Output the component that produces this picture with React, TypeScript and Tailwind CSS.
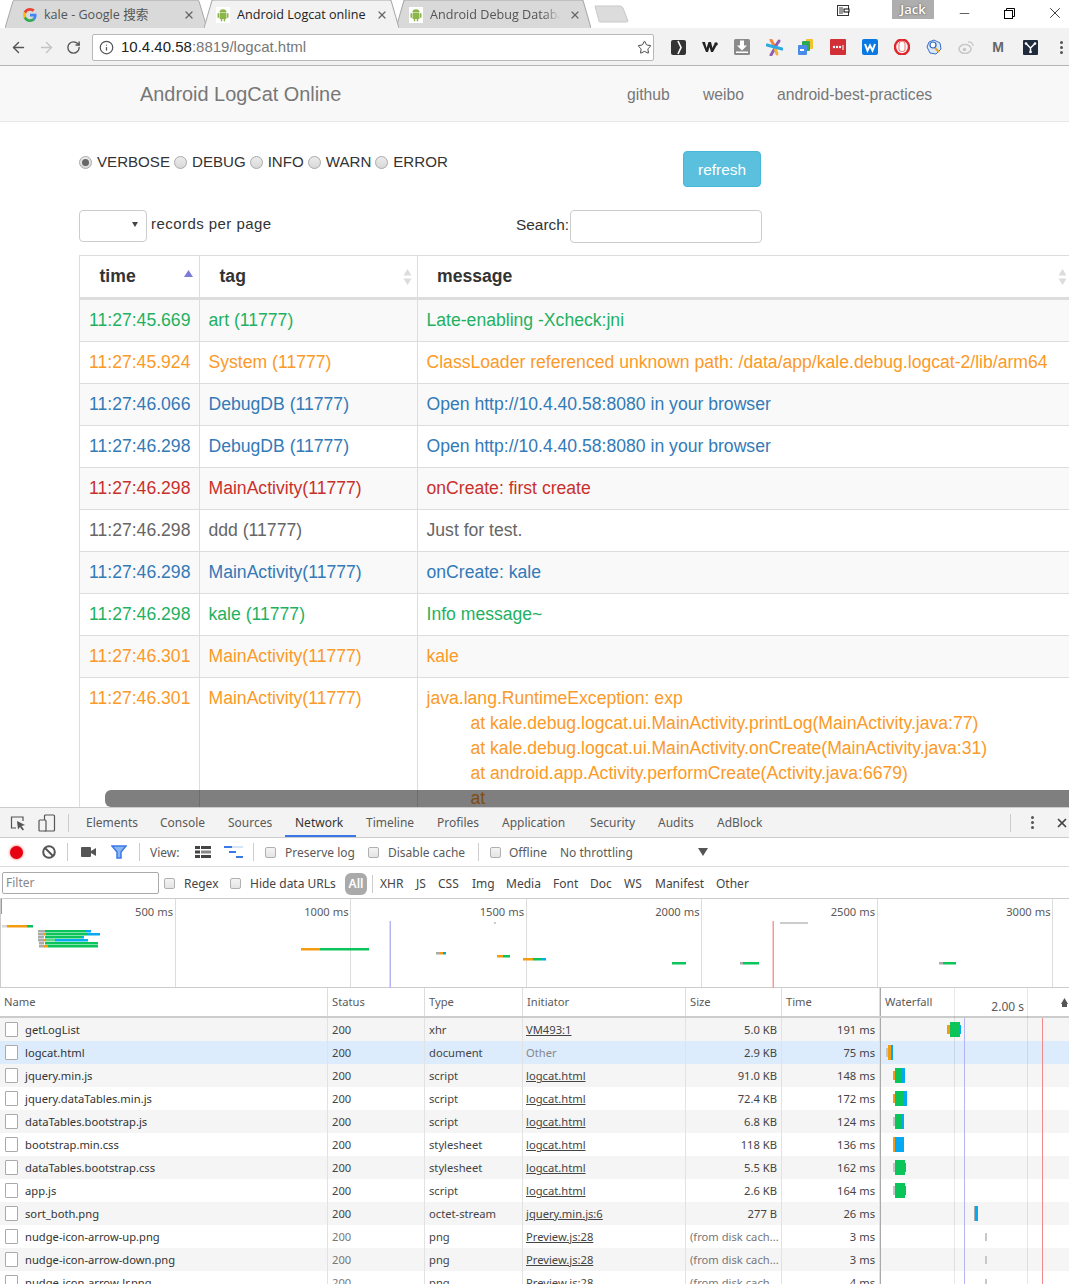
import { ArrowLeft, ArrowRight, Info, Minus, RotateCw, Star, X } from "lucide-react";

const tabs = [
  { title: "kale - Google 搜索", w: "w-[202px]", pad: "pl-[18px] pr-[12px]", icon: "g", active: false, fade: false },
  { title: "Android Logcat online", w: "w-[195px]", pad: "pl-[12px] pr-[11px]", icon: "a", active: true, fade: false },
  { title: "Android Debug Database", w: "w-[195px]", pad: "pl-[13px] pr-[10px]", icon: "a", active: false, fade: true },
];

const logRows = [
  { time: "11:27:45.669", tag: "art (11777)", msg: "Late-enabling -Xcheck:jni", color: "text-[#1fb162]" },
  { time: "11:27:45.924", tag: "System (11777)", msg: "ClassLoader referenced unknown path: /data/app/kale.debug.logcat-2/lib/arm64", color: "text-[#fb9a28]" },
  { time: "11:27:46.066", tag: "DebugDB (11777)", msg: "Open http://10.4.40.58:8080 in your browser", color: "text-[#337ab7]" },
  { time: "11:27:46.298", tag: "DebugDB (11777)", msg: "Open http://10.4.40.58:8080 in your browser", color: "text-[#337ab7]" },
  { time: "11:27:46.298", tag: "MainActivity(11777)", msg: "onCreate: first create", color: "text-[#c9302c]" },
  { time: "11:27:46.298", tag: "ddd (11777)", msg: "Just for test.", color: "text-[#666666]" },
  { time: "11:27:46.298", tag: "MainActivity(11777)", msg: "onCreate: kale", color: "text-[#337ab7]" },
  { time: "11:27:46.298", tag: "kale (11777)", msg: "Info message~", color: "text-[#1fb162]" },
  { time: "11:27:46.301", tag: "MainActivity(11777)", msg: "kale", color: "text-[#fb9a28]" },
];

const stackLines = [
  "at kale.debug.logcat.ui.MainActivity.printLog(MainActivity.java:77)",
  "at kale.debug.logcat.ui.MainActivity.onCreate(MainActivity.java:31)",
  "at android.app.Activity.performCreate(Activity.java:6679)",
  "at",
];

const levels = ["VERBOSE", "DEBUG", "INFO", "WARN", "ERROR"];

const panelTabs = [
  { label: "Elements", w: "w-[74px]" },
  { label: "Console", w: "w-[68px]" },
  { label: "Sources", w: "w-[67px]" },
  { label: "Network", w: "w-[71px]" },
  { label: "Timeline", w: "w-[71px]" },
  { label: "Profiles", w: "w-[65px]" },
  { label: "Application", w: "w-[88px]" },
  { label: "Security", w: "w-[68px]" },
  { label: "Audits", w: "w-[59px]" },
  { label: "AdBlock", w: "w-[60px]" },
];

const typeFilters = [
  { label: "XHR", w: "w-[36px]" },
  { label: "JS", w: "w-[22px]" },
  { label: "CSS", w: "w-[34px]" },
  { label: "Img", w: "w-[34px]" },
  { label: "Media", w: "w-[47px]" },
  { label: "Font", w: "w-[37px]" },
  { label: "Doc", w: "w-[34px]" },
  { label: "WS", w: "w-[31px]" },
  { label: "Manifest", w: "w-[61px]" },
  { label: "Other", w: "w-[40px]" },
];

const requests = [
  ["getLogList", "200", "xhr", "VM493:1", "5.0 KB", "191 ms"],
  ["logcat.html", "200", "document", "Other", "2.9 KB", "75 ms"],
  ["jquery.min.js", "200", "script", "logcat.html", "91.0 KB", "148 ms"],
  ["jquery.dataTables.min.js", "200", "script", "logcat.html", "72.4 KB", "172 ms"],
  ["dataTables.bootstrap.js", "200", "script", "logcat.html", "6.8 KB", "124 ms"],
  ["bootstrap.min.css", "200", "stylesheet", "logcat.html", "118 KB", "136 ms"],
  ["dataTables.bootstrap.css", "200", "stylesheet", "logcat.html", "5.5 KB", "162 ms"],
  ["app.js", "200", "script", "logcat.html", "2.6 KB", "164 ms"],
  ["sort_both.png", "200", "octet-stream", "jquery.min.js:6", "277 B", "26 ms"],
  ["nudge-icon-arrow-up.png", "200", "png", "Preview.js:28", "(from disk cach...", "3 ms"],
  ["nudge-icon-arrow-down.png", "200", "png", "Preview.js:28", "(from disk cach...", "3 ms"],
  ["nudge-icon-arrow-lr.png", "200", "png", "Preview.js:28", "(from disk cach...", "4 ms"],
];

// x, y, width, height, colour of every bar in the overview chart
const overviewBars: [number, number, number, number, string][] = [
  [2, 925, 5, 2.5, "#d8d8d8"], [7, 925, 20, 2.5, "#f39c12"], [27, 925, 6, 2.5, "#0bbf5c"],
  [38, 930, 7, 2.5, "#aaaaaa"], [45, 930, 40, 2.5, "#0bc45a"], [85, 930, 6, 2.5, "#04a9f4"],
  [38, 933, 6, 2.5, "#aaaaaa"], [44, 933, 2, 2.5, "#f39c12"], [46, 933, 42, 2.5, "#0bc45a"], [88, 933, 12, 2.5, "#04a9f4"],
  [38, 936, 6, 2.5, "#aaaaaa"], [45, 936, 37, 2.5, "#0bc45a"], [82, 936, 2, 2.5, "#04a9f4"],
  [38, 939, 5, 2.5, "#aaaaaa"], [43, 939, 2, 2.5, "#f39c12"], [45, 939, 10, 2.5, "#5fd38c"], [55, 939, 33, 2.5, "#04a9f4"],
  [39, 942, 5, 2.5, "#aaaaaa"], [45, 942, 52, 2.5, "#0bc45a"], [97, 942, 1, 2.5, "#04a9f4"],
  [39, 945, 5, 2.5, "#aaaaaa"], [44, 945, 4, 2.5, "#f39c12"], [48, 945, 49, 2.5, "#0bc45a"], [97, 945, 1, 2.5, "#04a9f4"],
  [301, 948, 19, 2.5, "#f39c12"], [320, 948, 49, 2.5, "#0bc45a"],
  [436, 952, 4, 2.5, "#aaaaaa"], [440, 952, 3, 2.5, "#f39c12"], [443, 952, 3, 2.5, "#04a9c4"],
  [494, 922, 2, 2, "#cccccc"],
  [497, 955, 6, 2.5, "#f39c12"], [503, 955, 7, 2.5, "#0bc45a"],
  [523, 958, 10, 2.5, "#f39c12"], [533, 958, 8, 2.5, "#0bc45a"], [541, 958, 5, 2.5, "#04a9f4"],
  [672, 962, 14, 2.5, "#0bc45a"],
  [740, 962, 3, 2.5, "#aaaaaa"], [743, 962, 16, 2.5, "#0bc45a"],
  [780, 922, 28, 2, "#cccccc"],
  [939, 962, 4, 2.5, "#aaaaaa"], [943, 962, 13, 2.5, "#0bc45a"],
];

// x offset inside the waterfall column, row index, segments
const waterfallBars: [number, number, [number, string][]][] = [
  [947, 0, [[3, "#f39c12"], [10, "#0bc45a"], [1, "#04a9f4"]]],
  [886, 1, [[2, "#c4c4c4"], [3, "#f39c12"], [2, "#04a9f4"]]],
  [893, 2, [[2, "#f39c12"], [7, "#0bc45a"], [3, "#04a9f4"]]],
  [893, 3, [[2, "#f39c12"], [8, "#0bc45a"], [4, "#04a9f4"]]],
  [893, 4, [[2, "#c4c4c4"], [6, "#0bc45a"], [3, "#04a9f4"]]],
  [893, 5, [[2, "#f39c12"], [9, "#04a9f4"]]],
  [893, 6, [[2, "#c4c4c4"], [10, "#0bc45a"], [1, "#04a9f4"]]],
  [893, 7, [[2, "#c4c4c4"], [10, "#0bc45a"], [1, "#04a9f4"]]],
  [974, 8, [[1, "#aaaaaa"], [3, "#04a9f4"]]],
];

function GoogleIcon() {
  return (
    <svg width="14" height="14" viewBox="0 0 48 48">
      <path fill="#EA4335" d="M24 9.500c3.500 0 6.700 1.300 9.100 3.500l6.800-6.800C35.800 2.400 30.200 0 24 0 14.600 0 6.500 5.400 2.600 13.200l7.900 6.100C12.400 13.600 17.700 9.500 24 9.500z" />
      <path fill="#4285F4" d="M46.500 24.500c0-1.600-.1-3.100-.4-4.500H24v9h12.700c-.5 2.900-2.200 5.400-4.700 7l7.600 5.900c4.400-4.100 6.900-10.100 6.900-17.400z" />
      <path fill="#FBBC05" d="M10.500 28.700c-.5-1.500-.8-3-.8-4.700s.3-3.200.8-4.700l-7.900-6.100C.9 16.500 0 20.100 0 24s.9 7.500 2.600 10.800l7.900-6.100z" />
      <path fill="#34A853" d="M24 48c6.500 0 11.900-2.100 15.900-5.800L32 36.300c-2.200 1.500-5 2.400-8 2.400-6.300 0-11.600-4.100-13.500-9.900l-7.900 6.100C6.500 42.600 14.600 48 24 48z" />
    </svg>
  );
}

function AndroidIcon() {
  return (
    <span className="flex h-[16px] w-[14px] items-center justify-center bg-white">
      <svg width="12" height="14" viewBox="0 0 12 14" fill="#8cb54a">
        <path d="M2.500 4.500a3.500 3.200 0 0 1 7 0z" />
        <rect x="2.500" y="5" width="7" height="6" rx="0.800" />
        <rect x="0.500" y="5" width="1.500" height="5" rx="0.700" />
        <rect x="10" y="5" width="1.500" height="5" rx="0.700" />
        <rect x="3.800" y="10" width="1.500" height="3.500" rx="0.700" />
        <rect x="6.700" y="10" width="1.500" height="3.500" rx="0.700" />
      </svg>
    </span>
  );
}

function BrowserTab({ title, w, pad, icon, active, fade }: (typeof tabs)[number]) {
  return (
    <div className={`relative -mr-[3px] flex h-[28px] shrink-0 items-center pt-[2px] ${w} ${pad} ${active ? "z-10" : ""}`}>
      <svg className="absolute inset-0 h-full w-full" viewBox="0 0 200 28" preserveAspectRatio="none">
        <path
          d="M0 28 L8 1 Q8.500 0 10 0 L190 0 Q191.500 0 192 1 L200 28"
          fill={active ? "#f2f2f2" : "#d9d9d9"}
          stroke="#a8a8a8"
          strokeWidth="1"
          vectorEffect="non-scaling-stroke"
        />
      </svg>
      <span className="relative mr-[7px] flex w-[14px] shrink-0 justify-center">{icon === "g" ? <GoogleIcon /> : <AndroidIcon />}</span>
      <span
        className={`relative flex-1 overflow-hidden whitespace-nowrap text-[12.6px] ${active ? "text-[#222]" : "text-[#555]"} ${fade ? "[mask-image:linear-gradient(to_left,transparent,black_16px)]" : ""}`}
      >
        {title}
      </span>
      <X className="relative ml-[9px] shrink-0 text-[#666]" size={12} strokeWidth={2.5} />
    </div>
  );
}

function ExtensionIcons() {
  return (
    <div className="ml-[8px] flex shrink-0 items-center">
      <span className="flex w-8 justify-center">
        <svg width="15" height="15" viewBox="0 0 15 15">
          <rect width="15" height="15" rx="2" fill="#333" />
          <path d="M7 1 L10 7.500 L7 14" fill="none" stroke="#fff" strokeWidth="1.600" />
        </svg>
      </span>
      <span className="flex w-8 justify-center">
        <svg width="16" height="12" viewBox="0 0 16 12">
          <path d="M0 1h3l1.500 6L6.500 1h2.500l1.500 6L12 3.500l2.500 1L11 11H9L7.500 6 6 11H4z" fill="#222" />
          <circle cx="14" cy="3" r="1.800" fill="#222" />
        </svg>
      </span>
      <span className="flex w-8 justify-center">
        <svg width="16" height="16" viewBox="0 0 16 16">
          <rect width="16" height="16" rx="1.500" fill="#8a8a8a" />
          <path d="M6 1.500h4v5h3l-5 5-5-5h3z" fill="#fff" />
          <rect x="2" y="12.500" width="12" height="1.500" fill="#fff" />
        </svg>
      </span>
      <span className="flex w-8 justify-center">
        <svg width="17" height="17" viewBox="0 0 17 17" strokeWidth="3" strokeLinecap="round">
          <path d="M5 1 L9 8" stroke="#f5853f" />
          <path d="M13 2 L9 8" stroke="#8e5fb5" />
          <path d="M5 16 L9 9" stroke="#8e5fb5" />
          <path d="M11 15 L9 9" stroke="#f2b33d" />
          <path d="M1 6 L16 10" stroke="#2fa9e0" />
        </svg>
      </span>
      <span className="flex w-8 justify-center">
        <svg width="16" height="16" viewBox="0 0 16 16">
          <rect x="8" y="0" width="7" height="10" rx="1" fill="#f2c230" />
          <rect x="4" y="2" width="8" height="10" rx="1" fill="#2fa84f" />
          <rect x="0" y="6" width="9" height="10" rx="1" fill="#4a8be8" />
          <rect x="2" y="10" width="4" height="2" fill="#fff" />
        </svg>
      </span>
      <span className="flex w-8 justify-center">
        <svg width="16" height="16" viewBox="0 0 16 16">
          <rect width="16" height="16" rx="1" fill="#d32f36" />
          <circle cx="4" cy="8" r="1.200" fill="#fff" />
          <circle cx="7" cy="8" r="1.200" fill="#fff" />
          <circle cx="10" cy="8" r="1.200" fill="#fff" />
          <rect x="12.500" y="6" width="1" height="5" fill="#fff" />
        </svg>
      </span>
      <span className="flex w-8 justify-center">
        <svg width="16" height="16" viewBox="0 0 16 16">
          <rect width="16" height="16" rx="2" fill="#0b79e3" />
          <path d="M3 5 L5.500 11.500 L8 6.500 L10.500 11.500 L13 5" fill="none" stroke="#fff" strokeWidth="2" />
        </svg>
      </span>
      <span className="flex w-8 justify-center">
        <svg width="16" height="16" viewBox="0 0 16 16">
          <ellipse cx="8" cy="8" rx="7" ry="7.500" fill="none" stroke="#e0262b" strokeWidth="2.400" />
          <rect x="5" y="2.500" width="6" height="10" rx="2.500" fill="#fff" stroke="#e0262b" strokeWidth="0.600" />
        </svg>
      </span>
      <span className="flex w-8 justify-center">
        <svg width="16" height="16" viewBox="0 0 16 16">
          <path d="M8 1 L14 4 L15 10 L10 15 L4 14 L1 8 L3 3z" fill="#d9e8fa" stroke="#3a6fc4" strokeWidth="1" />
          <circle cx="7" cy="6" r="3" fill="#fff" stroke="#2a64c0" strokeWidth="1.200" />
          <path d="M9 9 L13 13" stroke="#e8a020" strokeWidth="2" />
        </svg>
      </span>
      <span className="flex w-8 justify-center">
        <svg width="16" height="14" viewBox="0 0 16 14">
          <ellipse cx="7" cy="9" rx="6" ry="4.500" fill="none" stroke="#c8c8c8" strokeWidth="1.600" />
          <circle cx="6.500" cy="9.500" r="1.800" fill="#c8c8c8" />
          <path d="M10 2 A4 4 0 0 1 15 6" fill="none" stroke="#c8c8c8" strokeWidth="1.300" />
        </svg>
      </span>
      <span className="flex w-8 justify-center font-['Liberation_Sans',sans-serif] text-[14px] font-bold leading-none text-[#666]">M</span>
      <span className="flex w-8 justify-center">
        <svg width="15" height="15" viewBox="0 0 15 15">
          <rect width="15" height="15" rx="1" fill="#1f2a3c" />
          <path d="M3 3.500 L7.500 8 L12 3.500 M7.500 8 V12.500" fill="none" stroke="#fff" strokeWidth="1.500" />
          <circle cx="3" cy="3.500" r="1.300" fill="#fff" />
          <circle cx="12" cy="3.500" r="1.300" fill="#fff" />
          <circle cx="7.500" cy="12" r="1.300" fill="#fff" />
        </svg>
      </span>
      <span className="flex w-[31px] flex-col items-center gap-[2px]">
        <span className="h-[3px] w-[3px] rounded-full bg-[#555]" />
        <span className="h-[3px] w-[3px] rounded-full bg-[#555]" />
        <span className="h-[3px] w-[3px] rounded-full bg-[#555]" />
      </span>
    </div>
  );
}

function BrowserChrome() {
  return (
    <div className="shrink-0 font-['Open_Sans','Noto_Sans_CJK_SC',sans-serif]">
      <div className="flex h-[28px] items-end bg-white pl-[5px]">
        {tabs.map((tab) => (
          <BrowserTab key={tab.title} {...tab} />
        ))}
        <svg className="mb-[5px] ml-[6px] shrink-0" width="36" height="18" viewBox="0 0 36 18">
          <path d="M1 1 H26 Q28 1 29 3 L34 16 Q34 17 32 17 H6 Q5 17 5 16z" fill="#dcdcdc" stroke="#c8c8c8" />
        </svg>
        <div className="flex-1" />
        <div className="flex h-[28px] items-start">
          <svg className="mr-[42px] mt-[5px]" width="13" height="12" viewBox="0 0 13 12" fill="none" stroke="#333">
            <rect x="0.500" y="0.500" width="11" height="10" />
            <path d="M3 2v7M5 2v7" />
            <rect x="7" y="4" width="5" height="3" fill="#fff" stroke="#000" />
          </svg>
          <div className="h-[19px] w-[42px] bg-[#aeaeae] text-center text-[13px] font-semibold leading-[19px] text-white [text-shadow:0_0_2px_#444]">Jack</div>
          <div className="flex h-[26px] w-[135px] items-center">
            <span className="flex w-[38px] shrink-0 justify-end"><Minus size={15} strokeWidth={1} className="text-black" /></span>
            <span className="ml-[30px] flex w-[14px] shrink-0 justify-center">
              <svg width="11" height="11" viewBox="0 0 11 11" fill="none" stroke="#000">
                <rect x="0.500" y="2.500" width="8" height="8" />
                <path d="M2.500 2.500V0.500H10.500V8.500H8.500" />
              </svg>
            </span>
            <span className="ml-[32px] flex w-[14px] shrink-0 justify-center"><X size={18} strokeWidth={1} className="shrink-0 text-black" /></span>
          </div>
        </div>
      </div>
      <div className="flex h-[38px] items-center border-b border-[#b4b4b4] bg-[#f2f2f2] pl-[10px] pt-[1px]">
        <ArrowLeft size={17} strokeWidth={2} className="shrink-0 text-[#555]" />
        <ArrowRight size={17} strokeWidth={2} className="ml-[11px] shrink-0 text-[#c4c4c4]" />
        <RotateCw size={15} strokeWidth={2.2} className="ml-[11px] shrink-0 text-[#555]" />
        <div className="ml-[11px] flex h-[27px] w-[562px] shrink-0 items-center rounded-[2px] border border-[#b8b8b8] bg-white pl-[6px] pr-[1px] font-['Liberation_Sans',sans-serif]">
          <Info size={15} strokeWidth={2} className="text-[#555]" />
          <span className="ml-[7px] text-[15px] text-[#222]">10.4.40.58</span>
          <span className="text-[15px] text-[#777]">:8819/logcat.html</span>
          <div className="flex-1" />
          <Star size={15} strokeWidth={1.6} className="text-[#444]" />
        </div>
        <ExtensionIcons />
      </div>
    </div>
  );
}

function Radio({ checked }: { checked: boolean }) {
  return (
    <span className="flex h-[13px] w-[13px] shrink-0 items-center justify-center rounded-full border border-[#a8a8a8] bg-gradient-to-b from-[#ececec] to-[#d8d8d8]">
      {checked && <span className="h-[7px] w-[7px] rounded-full bg-[#666]" />}
    </span>
  );
}

function SortIcon({ active }: { active?: boolean }) {
  if (active) {
    return (
      <svg width="9" height="8" viewBox="0 0 9 8">
        <path d="M4.500 0 L9 7 H0z" fill="#7b7bd8" />
      </svg>
    );
  }
  return (
    <svg width="9" height="16" viewBox="0 0 9 16" fill="#dcdcdc">
      <path d="M4.500 0 L8.500 6.500 H0.500z" />
      <path d="M4.500 16 L8.500 9.500 H0.500z" />
    </svg>
  );
}

function LogRow({ row, odd }: { row: (typeof logRows)[number]; odd: boolean }) {
  return (
    <div className={`grid h-[42px] grid-cols-[120px_218px_1fr] border-b border-[#ddd] text-[17.6px] ${row.color} ${odd ? "bg-[#f9f9f9]" : "bg-white"}`}>
      <div className="flex items-center border-r border-[#ddd] pl-[9px]">{row.time}</div>
      <div className="flex items-center border-r border-[#ddd] pl-[8.5px]">{row.tag}</div>
      <div className="flex items-center whitespace-nowrap pl-[8.5px]">{row.msg}</div>
    </div>
  );
}

function LogPage() {
  return (
    <div className="relative h-[741px] shrink-0 overflow-hidden bg-white font-['Liberation_Sans',sans-serif]">
      <div className="flex h-[56px] items-center border-b border-[#e7e7e7] bg-[#f8f8f8] pt-[2px] text-[#777]">
        <div className="ml-[140px] w-[487px] text-[19.9px]">Android LogCat Online</div>
        <div className="w-[76px] text-[15.7px]">github</div>
        <div className="w-[74px] text-[15.7px]">weibo</div>
        <div className="text-[15.7px]">android-best-practices</div>
      </div>

      <div className="pl-[79px]">
        <div className="mt-[29px] flex h-[36px] items-start">
          <div className="flex h-[22px] w-[604px] items-center text-[15.1px] text-[#333]">
            {levels.map((level, i) => (
              <div key={level} className="mr-[4px] flex items-center gap-[5px]">
                <Radio checked={i === 0} />
                <span>{level}</span>
              </div>
            ))}
          </div>
          <button className="h-[36px] w-[78px] rounded-[4px] border border-[#46b8da] bg-[#5bc0de] pt-[2px] text-[15.4px] text-white">refresh</button>
        </div>

        <div className="mt-[23px] flex h-[32px] items-center text-[#333]">
          <div className="flex h-[32px] w-[68px] items-center justify-end rounded-[4px] border border-[#ccc] bg-white pb-[3px] pr-[8px]">
            <svg width="6" height="5" viewBox="0 0 6 5"><path d="M0 0 H6 L3 5z" fill="#444" /></svg>
          </div>
          <span className="mb-[4px] ml-[4px] w-[365px] text-[15px] tracking-[0.45px]">records per page</span>
          <span className="mb-[2px] w-[54px] text-[15.4px]">Search:</span>
          <div className="h-[33px] w-[192px] rounded-[4px] border border-[#ccc] bg-white" />
        </div>

        <div className="mt-[13px] w-[1100px] border-l border-t border-[#ddd]">
          <div className="grid h-[44px] grid-cols-[120px_218px_1fr] border-b-[3px] border-[#ddd] text-[17.6px] font-bold text-[#333]">
            <div className="flex items-center justify-between border-r border-[#ddd] pl-[19.5px] pr-[6px]">
              <span>time</span>
              <span className="-mt-[5px]"><SortIcon active /></span>
            </div>
            <div className="flex items-center justify-between border-r border-[#ddd] pl-[19.5px] pr-[5px]">
              <span>tag</span>
              <SortIcon />
            </div>
            <div className="flex items-center justify-between pl-[19px] pr-[112px]">
              <span>message</span>
              <SortIcon />
            </div>
          </div>
          {logRows.map((row, i) => (
            <LogRow key={i} row={row} odd={i % 2 === 0} />
          ))}
          <div className="grid grid-cols-[120px_218px_1fr] text-[17.6px] text-[#fb9a28]">
            <div className="border-r border-[#ddd] pl-[9px] pt-[8px] leading-[25px]">11:27:46.301</div>
            <div className="border-r border-[#ddd] pl-[8.5px] pt-[8px] leading-[25px]">MainActivity(11777)</div>
            <div className="whitespace-nowrap pl-[8.5px] pt-[8px] leading-[25px]">
              <div>java.lang.RuntimeException: exp</div>
              {stackLines.map((line) => (
                <div key={line} className="pl-[44px]">{line}</div>
              ))}
            </div>
          </div>
        </div>
      </div>

      <div className="absolute bottom-0 left-[105px] right-0 h-[17px] rounded-l-[6px] bg-black/50" />
    </div>
  );
}

function Check({ className = "" }: { className?: string }) {
  return <span className={`h-[11px] w-[11px] shrink-0 rounded-[2px] border border-[#b0b0b0] bg-gradient-to-b from-[#f4f4f4] to-[#e4e4e4] ${className}`} />;
}

function Sep({ className = "" }: { className?: string }) {
  return <span className={`h-[18px] w-px shrink-0 bg-[#ccc] ${className}`} />;
}

function PanelTabs() {
  return (
    <div className="flex h-[31px] items-center border-b border-t border-[#ccc] bg-[#f3f3f3] text-[#5a5a5a]">
      <svg className="ml-[10px]" width="16" height="16" viewBox="0 0 16 16">
        <path d="M6 13 H1.500 V2 H13 V6" fill="none" stroke="#555" strokeWidth="1.200" />
        <path d="M7 6 L15 10 L11.500 11 L14 14.500 L12.500 15.500 L10 12 L8 14.500z" fill="#555" />
      </svg>
      <svg className="ml-[12px]" width="18" height="18" viewBox="0 0 18 18" fill="none" stroke="#555" strokeWidth="1.200">
        <rect x="6.500" y="1" width="10" height="16" rx="1" />
        <rect x="1" y="6" width="7" height="11" rx="1" fill="#f3f3f3" />
      </svg>
      <Sep className="ml-[12px] mr-[7px]" />
      <div className="flex h-full items-stretch">
        {panelTabs.map((t) => (
          <div
            key={t.label}
            className={`flex items-center whitespace-nowrap pl-[10px] ${t.w} ${t.label === "Network" ? "border-b-[2px] border-[#3b78e7] pt-[2px] text-[#333]" : ""}`}
          >
            {t.label}
          </div>
        ))}
      </div>
      <div className="flex-1" />
      <Sep />
      <span className="ml-[20px] flex flex-col gap-[2px]">
        <span className="h-[3px] w-[3px] rounded-full bg-[#555]" />
        <span className="h-[3px] w-[3px] rounded-full bg-[#555]" />
        <span className="h-[3px] w-[3px] rounded-full bg-[#555]" />
      </span>
      <X className="ml-[21px] mr-[0px] text-[#444]" size={14} strokeWidth={3} />
    </div>
  );
}

function NetworkToolbar() {
  const label = "pt-[2px]";
  return (
    <div className="flex h-[29px] items-center border-b border-[#ddd] bg-white text-[#5a5a5a]">
      <span className="ml-[10px] h-[13px] w-[13px] rounded-full bg-[#e60012] shadow-[0_0_3px_#f04a4a]" />
      <svg className="ml-[19px]" width="14" height="14" viewBox="0 0 14 14" fill="none" stroke="#555" strokeWidth="2">
        <circle cx="7" cy="7" r="5.800" />
        <path d="M3 3 L11 11" />
      </svg>
      <Sep className="ml-[11px] mr-[13px]" />
      <svg width="15" height="10" viewBox="0 0 15 10" fill="#555">
        <rect width="10" height="10" rx="1" />
        <path d="M10 4 L15 1 V9 L10 6z" />
      </svg>
      <svg className="ml-[15px]" width="16" height="14" viewBox="0 0 16 14">
        <path d="M1 1 H15 L10 7 V13 H6 V7z" fill="#8ab6f0" stroke="#3b78e7" strokeWidth="1.500" />
      </svg>
      <Sep className="ml-[12px] mr-[10px]" />
      <span className={`w-[45px] ${label}`}>View:</span>
      <svg width="16" height="12" viewBox="0 0 16 12" fill="#444">
        <rect width="5" height="3" /><rect x="6" width="10" height="3" />
        <rect y="4.500" width="5" height="3" /><rect x="6" y="4.500" width="10" height="3" fill="#888" />
        <rect y="9" width="5" height="3" /><rect x="6" y="9" width="10" height="3" />
      </svg>
      <svg className="ml-[13px]" width="19" height="12" viewBox="0 0 19 12" fill="#3b78e7">
        <rect width="8" height="2" /><rect x="8" width="11" height="2" fill="#d6e4fa" />
        <rect x="5" y="5" width="7" height="2" /><rect x="12" y="10" width="7" height="2" />
      </svg>
      <Sep className="ml-[10px] mr-[11px]" />
      <Check />
      <span className={`ml-[9px] w-[83px] whitespace-nowrap ${label}`}>Preserve log</span>
      <Check />
      <span className={`ml-[9px] w-[90px] whitespace-nowrap ${label}`}>Disable cache</span>
      <Sep className="h-[17px]" />
      <Check className="ml-[11px]" />
      <span className={`ml-[8px] w-[51px] ${label}`}>Offline</span>
      <span className={`w-[138px] whitespace-nowrap ${label}`}>No throttling</span>
      <svg width="10" height="8" viewBox="0 0 10 8"><path d="M0 0 H10 L5 8z" fill="#555" /></svg>
    </div>
  );
}

function FilterBar() {
  return (
    <div className="flex h-[32px] items-center border-b border-[#ccc] bg-white pt-[2px] text-[#444]">
      <div className="-mt-[2px] ml-[2px] flex h-[22px] w-[157px] items-center rounded-[2px] border border-[#aaa] pl-[3px] text-[#888]">Filter</div>
      <Check className="ml-[5px]" />
      <span className="ml-[9px] w-[46px]">Regex</span>
      <Check />
      <span className="ml-[9px] w-[95px] whitespace-nowrap">Hide data URLs</span>
      <span className="flex h-[22px] w-[22px] items-center justify-center rounded-[6px] bg-[#aaa] font-semibold text-white">All</span>
      <Sep className="ml-[5px] mr-[7px] h-[17px]" />
      {typeFilters.map((f) => (
        <span key={f.label} className={`whitespace-nowrap ${f.w}`}>{f.label}</span>
      ))}
    </div>
  );
}

function Overview() {
  return (
    <div className="relative flex h-[89px] border-b border-[#ccc] bg-white text-[11.2px] text-[#5a5a5a]">
      {["500 ms", "1000 ms", "1500 ms", "2000 ms", "2500 ms", "3000 ms"].map((label) => (
        <div key={label} className="h-full w-[175.5px] shrink-0 border-r border-[#ddd] pr-[1.5px] pt-[4px] text-right leading-[18px]">{label}</div>
      ))}
      <svg className="absolute left-0 top-0" width="1069" height="89" viewBox="0 899 1069 89">
        <rect x="0" y="899" width="2" height="15" fill="#999" />
        <rect x="0" y="899" width="1" height="89" fill="#ccc" />
        <rect x="389.500" y="921" width="1.500" height="67" fill="#b5b5f5" />
        <rect x="772.500" y="921" width="1.500" height="67" fill="#f59a9a" />
        {overviewBars.map(([x, y, w, h, c], i) => (
          <rect key={i} x={x} y={y} width={w} height={h} fill={c} />
        ))}
      </svg>
    </div>
  );
}

const cols = "grid grid-cols-[328px_97px_98px_163px_96px_98px_1fr]";

function FileIcon() {
  return <span className="h-[15px] w-[13px] shrink-0 rounded-[1px] border border-[#aaa] bg-white" />;
}

function NetworkTable() {
  return (
    <div className="relative flex-1 overflow-hidden text-[11.2px] text-[#444]">
      <div className={`${cols} h-[30px] border-b-2 border-[#ccc] bg-white text-[#5a5a5a]`}>
        {["Name", "Status", "Type", "Initiator", "Size", "Time"].map((h) => (
          <div key={h} className="flex items-center border-r border-[#ddd] pl-[4px]">{h}</div>
        ))}
        <div className="flex items-start border-l border-[#aaa] pl-[4px] pt-[8px]">Waterfall</div>
      </div>
      {requests.map((r, i) => {
        const bg = i === 1 ? "bg-[#dcecfd]" : i % 2 === 0 ? "bg-[#f5f5f5]" : "bg-white";
        return (
          <div key={r[0]} className={`${cols} h-[23px] ${bg}`}>
            <div className="flex items-center gap-[7px] border-r border-[#e2e2e2] pl-[5px]">
              <FileIcon />
              <span className="text-[#333]">{r[0]}</span>
            </div>
            <div className={`flex items-center border-r border-[#e2e2e2] pl-[4px] ${i > 8 ? "text-[#777]" : ""}`}>{r[1]}</div>
            <div className="flex items-center border-r border-[#e2e2e2] pl-[4px]">{r[2]}</div>
            <div className={`flex items-center border-r border-[#e2e2e2] pl-[3px] ${r[3] === "Other" ? "text-[#888]" : "underline"}`}>{r[3]}</div>
            <div className={`flex items-center overflow-hidden whitespace-nowrap border-r border-[#e2e2e2] pr-[4px] ${i > 8 ? "justify-start pl-[4px] text-[#777]" : "justify-end"}`}>{r[4]}</div>
            <div className="flex items-center justify-end border-r border-[#e2e2e2] pr-[4px]">{r[5]}</div>
            <div className="border-l border-[#aaa]" />
          </div>
        );
      })}
      <div className="absolute right-[45px] top-[13px] text-[12px] text-[#5a5a5a]">2.00 s</div>
      <svg className="absolute right-0 top-[10px]" width="9" height="12" viewBox="0 0 9 12" fill="#555">
        <path d="M4.500 0 L8 6 H1z" />
        <rect x="2" y="6" width="5" height="3" />
      </svg>
      <svg className="absolute left-0 top-0" width="1069" height="296" viewBox="0 988 1069 296">
        <rect x="954" y="988" width="1" height="296" fill="#000" opacity="0.09" />
        <rect x="1027" y="988" width="1" height="296" fill="#000" opacity="0.09" />
        <rect x="964" y="1018" width="1" height="266" fill="#b5b5f5" />
        <rect x="1042" y="1018" width="1" height="266" fill="#f08a8a" />
        {waterfallBars.map(([x, row, segs]) => {
          let at = x;
          return segs.map(([w, c], i) => {
            const left = at;
            at += w;
            const tall = (i > 0 && w > 1) || segs.length === 2;
            return <rect key={`${row}-${i}`} x={left} y={tall ? 1022 + row * 23 : 1025 + row * 23} width={w} height={tall ? 15 : 9} fill={c} />;
          });
        })}
        <rect x="985" y="1233" width="2" height="8" fill="#c8c8c8" />
        <rect x="985" y="1256" width="2" height="8" fill="#c8c8c8" />
        <rect x="985" y="1279" width="2" height="8" fill="#c8c8c8" />
      </svg>
    </div>
  );
}

function DevTools() {
  return (
    <div className="flex min-h-0 flex-1 flex-col font-['Noto_Sans',sans-serif] text-[12px] leading-none">
      <PanelTabs />
      <NetworkToolbar />
      <FilterBar />
      <Overview />
      <NetworkTable />
    </div>
  );
}

export default function App() {
  return (
    <div className="flex h-[1284px] w-[1069px] flex-col overflow-hidden bg-white">
      <BrowserChrome />
      <LogPage />
      <DevTools />
    </div>
  );
}
